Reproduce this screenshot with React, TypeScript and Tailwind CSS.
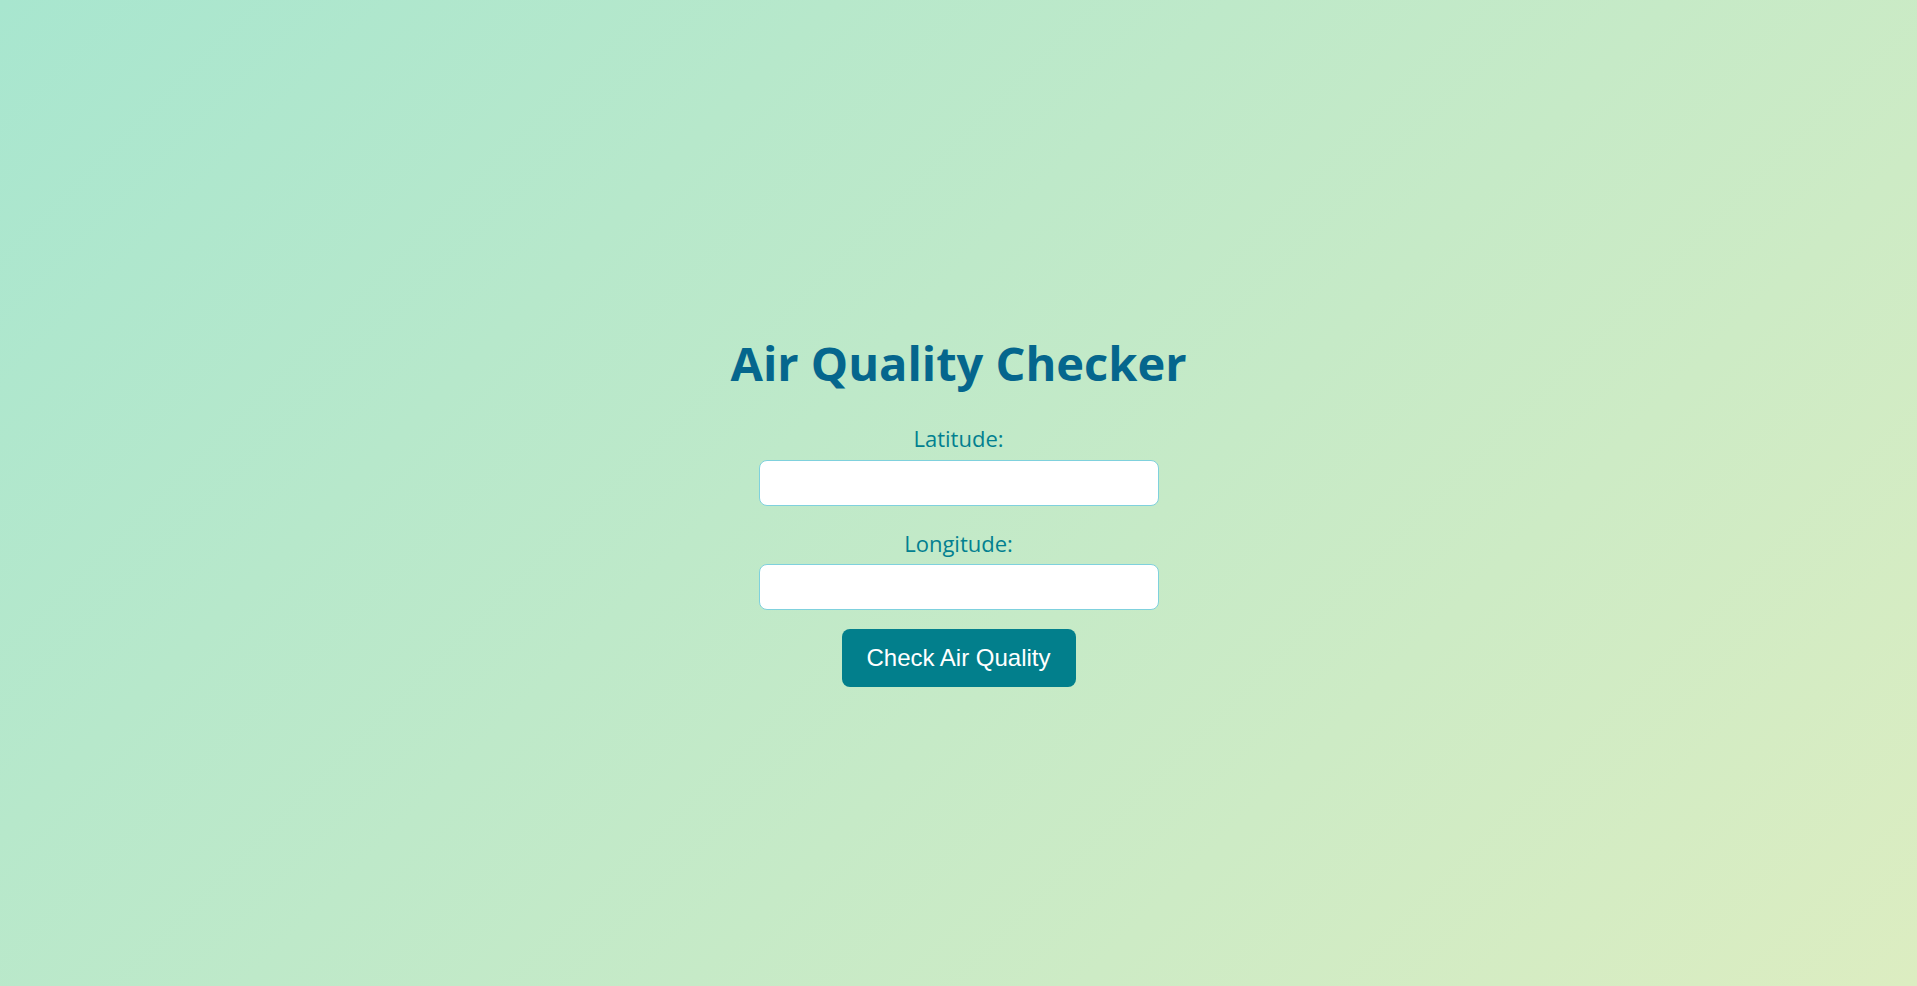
import React from "react";

export default function App() {
  return (
    <div className="min-h-screen w-full bg-[linear-gradient(135deg,#a8e6cf_0%,#dcedc1_100%)] flex flex-col items-center pt-[335px] font-['Open_Sans',sans-serif]">
      <h1 className="text-[47px] leading-[1.2] font-bold text-[#05668d] m-0">Air Quality Checker</h1>
      <label className="mt-[31px] mb-[5px] text-[22px] leading-[1.5] text-[#028090]" htmlFor="lat">Latitude:</label>
      <input id="lat" type="text" className="w-[400px] h-[46px] bg-white border border-[#7fd1dd] rounded-[8px] outline-none px-3" />
      <label className="mt-[21px] mb-[4px] text-[22px] leading-[1.5] text-[#028090]" htmlFor="lon">Longitude:</label>
      <input id="lon" type="text" className="w-[400px] h-[46px] bg-white border border-[#7fd1dd] rounded-[8px] outline-none px-3" />
      <button className="mt-[19px] w-[234px] h-[58px] rounded-[8px] bg-[#027f8c] text-white text-[24px] font-['Liberation_Sans',Arial,sans-serif]">Check Air Quality</button>
    </div>
  );
}
